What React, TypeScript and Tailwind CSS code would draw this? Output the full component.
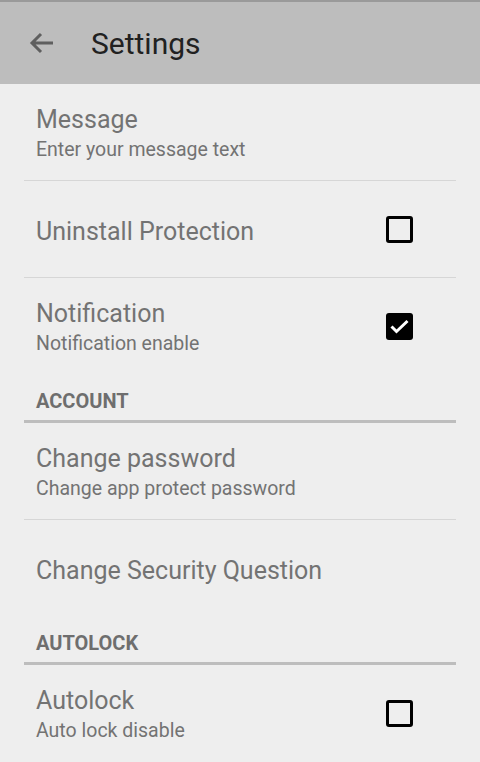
import React from 'react';

type Pref = {
  title: string;
  summary?: string;
  check?: 'on' | 'off';
};

const font = { fontFamily: 'Roboto, "Noto Sans", sans-serif' };

function Checkbox({ on }: { on: boolean }) {
  if (on) {
    return (
      <div className="w-[27px] h-[27px] rounded-[3px] bg-black">
        <svg width="27" height="27" viewBox="0 0 27 27" fill="none">
          <path d="M5.5 13.5l5 5L21.5 8" stroke="#fff" strokeWidth="3" />
        </svg>
      </div>
    );
  }
  return <div className="w-[27px] h-[27px] rounded-[3px] border-[3px] border-black" />;
}

function Item({ title, summary, check }: Pref) {
  return (
    <div className="h-[96px] flex items-center pl-[12px] pr-[43px]">
      <div className="flex-1 flex flex-col pt-[5px]">
        <span className="text-[25px] leading-[31px] text-[#737373]">{title}</span>
        {summary && <span className="text-[19.5px] leading-[30px] text-[#737373]">{summary}</span>}
      </div>
      {check && <Checkbox on={check === 'on'} />}
    </div>
  );
}

function Divider() {
  return <div className="h-px bg-[#d6d6d6]" />;
}

function Category({ label }: { label: string }) {
  return (
    <div className="h-[49px] flex flex-col justify-end">
      <span className="pl-[12px] text-[20px] font-bold leading-[26px] text-[#6e6e6e] mb-[6px]">{label}</span>
      <div className="h-[3px] bg-[#bdbdbd]" />
    </div>
  );
}

export default function App() {
  return (
    <div className="w-[480px] h-[762px] bg-[#eeeeee] overflow-hidden" style={font}>
      {/* Action bar */}
      <div className="h-[84px] bg-[#bdbdbd] border-t-[2px] border-[#9a9a9a] flex items-center">
        <div className="w-[91px] flex items-center pl-[29px]">
          <svg width="26" height="24" viewBox="0 0 26 24" fill="none">
            <path d="M24 12H3M12 3L3 12l9 9" stroke="#5f5f5f" strokeWidth="3" />
          </svg>
        </div>
        <span className="text-[30px] text-[#212121]">Settings</span>
      </div>

      {/* Preference list */}
      <div className="mx-[24px]">
        <Item title="Message" summary="Enter your message text" />
        <Divider />
        <Item title="Uninstall Protection" check="off" />
        <Divider />
        <Item title="Notification" summary="Notification enable" check="on" />
        <Category label="ACCOUNT" />
        <Item title="Change password" summary="Change app protect password" />
        <Divider />
        <Item title="Change Security Question" />
        <Category label="AUTOLOCK" />
        <Item title="Autolock" summary="Auto lock disable" check="off" />
      </div>
    </div>
  );
}
